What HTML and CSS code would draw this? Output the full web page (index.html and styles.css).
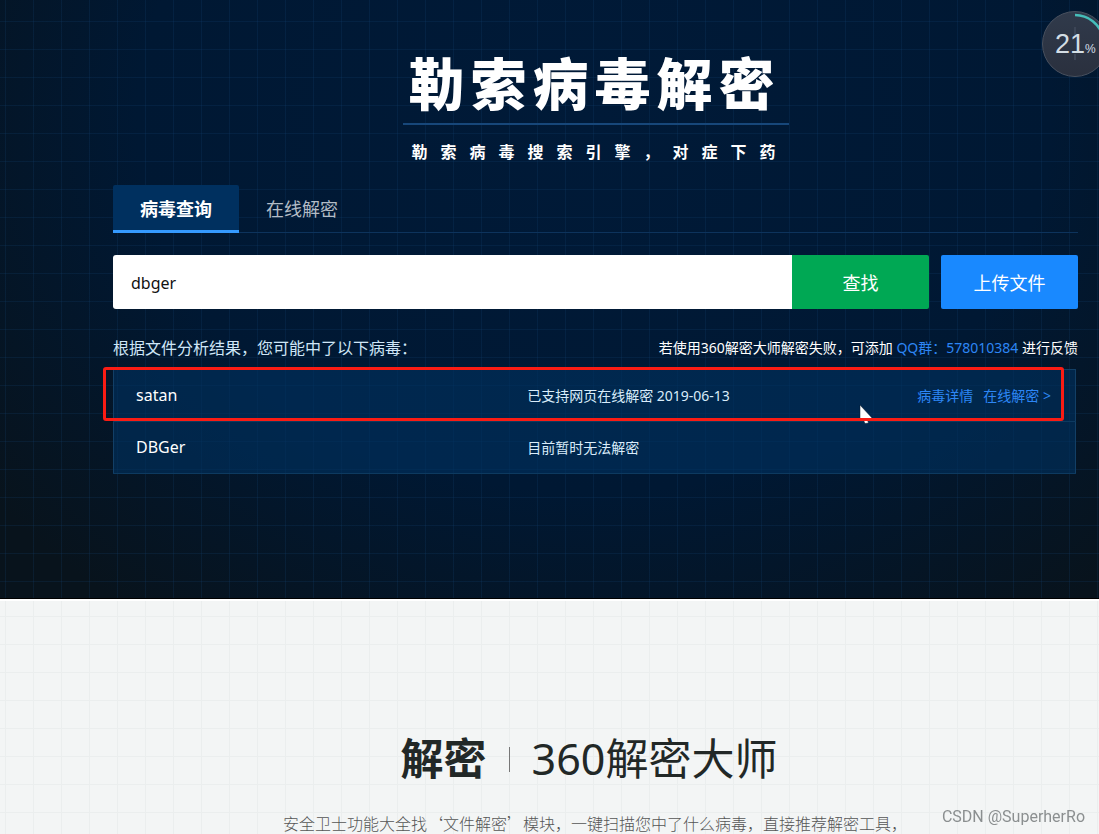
FILE: index.html
```html
<!DOCTYPE html>
<html lang="zh-CN">
<head>
<meta charset="utf-8">
<title>勒索病毒解密</title>
<link rel="stylesheet" href="styles.css">
</head>
<body>
<header class="hero">
  <div class="brand">
    <h1 class="brand-title">勒索病毒解密</h1>
    <p class="brand-sub">勒索病毒搜索引擎，对症下药</p>
  </div>
  <nav class="tabs">
    <button class="tab tab-active" type="button">病毒查询</button>
    <button class="tab" type="button">在线解密</button>
  </nav>
  <form class="search">
    <input class="search-input" type="text" value="dbger" aria-label="病毒名称">
    <button class="btn btn-find" type="button">查找</button>
    <button class="btn btn-upload" type="button">上传文件</button>
  </form>
  <div class="notes">
    <p class="notes-result">根据文件分析结果，您可能中了以下病毒：</p>
    <p class="notes-help">若使用360解密大师解密失败，可添加 <a href="#">QQ群：578010384</a> 进行反馈</p>
  </div>
  <div class="results-wrap">
    <table class="results">
      <tr>
        <td class="col-name">satan</td>
        <td class="col-state">已支持网页在线解密 2019-06-13</td>
        <td class="col-links"><a href="#">病毒详情</a><a href="#">在线解密 &gt;</a></td>
      </tr>
      <tr>
        <td class="col-name">DBGer</td>
        <td class="col-state">目前暂时无法解密</td>
        <td class="col-links"></td>
      </tr>
    </table>
    <svg class="cursor" viewBox="0 0 14 20" aria-hidden="true"><path d="M1 0V16L4 14L6 18.500L9.500 18L8 13.500H13.500Z" fill="#fff" stroke="#0a1a2c" stroke-width="0.500"/></svg>
    <div class="marker"></div>
  </div>
  <div class="meter">
    <svg class="meter-ring" viewBox="0 0 66 66" aria-hidden="true">
      <defs><linearGradient id="disc" x1="0" y1="0" x2="0" y2="1"><stop offset="0" stop-color="#303a4b"/><stop offset="1" stop-color="#2a303e"/></linearGradient></defs>
      <circle cx="33" cy="33" r="32.500" fill="url(#disc)" stroke="#48505e"/>
      <path d="M33 26V16M33 43V49" stroke="#3c4556" stroke-width="2"/>
      <path d="M33 4A29 29 0 0 1 61 26" fill="none" stroke="#45bdb9" stroke-width="2.500"/>
    </svg>
    <span class="meter-value">21<small>%</small></span>
  </div>
</header>
<main class="tool">
  <h2 class="tool-title"><b>解密</b><span class="tool-bar"></span><span>360解密大师</span></h2>
  <p class="tool-text">安全卫士功能大全找‘文件解密’模块，一键扫描您中了什么病毒，直接推荐解密工具，</p>
</main>
<div class="watermark">CSDN @SuperherRo</div>
</body>
</html>
```

FILE: styles.css
```css
* {
  box-sizing: border-box;
}

body {
  margin: 0;
  overflow-x: hidden;
  background: #f3f5f5;
  font-family: "Noto Sans", "Noto Sans CJK SC", sans-serif;
  font-size: 16px;
}

h1, h2, p {
  margin: 0;
}

a {
  color: #2d86f5;
  text-decoration: none;
}

button, input {
  border: 0;
  font-family: inherit;
}

.hero {
  position: relative;
  min-height: 599px;
  padding: 43px 21px 124px 113px;
  overflow: hidden;
  border-bottom: 1px solid #000;
  color: #fff;
  background:
    repeating-linear-gradient(90deg, transparent 0 5px, rgba(20, 70, 120, 0.2) 5px 6px, transparent 6px 28px),
    repeating-linear-gradient(180deg, transparent 0 21px, rgba(20, 70, 120, 0.2) 21px 22px, transparent 22px 28px),
    radial-gradient(ellipse 760px 620px at 54% 20%, #001a38 0%, #001833 60%, #08131c 100%);
}

.brand {
  display: flex;
  flex-direction: column;
  align-items: center;
}

.brand-title {
  width: 386px;
  padding-left: 6px;
  border-bottom: 2px solid #17477a;
  font-size: 56px;
  font-weight: 900;
  line-height: 80px;
  letter-spacing: 6px;
  white-space: nowrap;
}

.brand-sub {
  width: 386px;
  padding: 14px 0 0 9px;
  font-size: 16px;
  font-weight: 700;
  line-height: 26px;
  letter-spacing: 13px;
  white-space: nowrap;
}

.tabs {
  display: flex;
  margin-top: 20px;
  border-bottom: 1px solid #0d335c;
}

.tab {
  width: 126px;
  height: 48px;
  margin-bottom: -1px;
  padding: 0;
  border-bottom: 3px solid transparent;
  background: none;
  color: #b3bcc6;
  font-size: 18px;
}

.tab-active {
  border-bottom-color: #359aff;
  border-radius: 2px 2px 0 0;
  background: #00305f;
  color: #fff;
  font-weight: 700;
}

.search {
  display: flex;
  margin-top: 22px;
}

.search-input {
  flex: 1;
  min-width: 0;
  height: 54px;
  padding: 2px 18px 0;
  border-radius: 3px 0 0 3px;
  background: #fff;
  color: #111;
  font-size: 16px;
}

.btn {
  width: 137px;
  height: 54px;
  border-radius: 2px;
  color: #fff;
  font-size: 18px;
}

.btn-find {
  border-radius: 0 2px 2px 0;
  background: #00a854;
}

.btn-upload {
  margin-left: 12px;
  background: #1989ff;
}

.notes {
  display: flex;
  justify-content: space-between;
  align-items: center;
  margin-top: 26px;
  line-height: 26px;
  white-space: nowrap;
}

.notes-result {
  color: #cfe6f7;
  font-size: 16px;
}

.notes-help {
  font-size: 14px;
}

.results-wrap {
  position: relative;
  margin: 8px 2px 0 0;
}

.results {
  width: 100%;
  border: 1px solid #123f66;
  border-collapse: collapse;
  background: rgba(0, 50, 96, 0.6);
}

.results td {
  height: 52px;
  padding: 0 0 2px;
  border-bottom: 1px solid #0d3a60;
}

.results .col-name {
  width: 43%;
  padding-left: 22px;
  font-size: 16px;
}

.col-state {
  color: #d9ecfa;
  font-size: 14px;
}

.results .col-links {
  padding-right: 24px;
  font-size: 14px;
  text-align: right;
}

.col-links a + a {
  margin-left: 10px;
}

.marker {
  position: absolute;
  top: -2px;
  right: 12px;
  left: -10px;
  height: 54px;
  border: 3px solid #fa1c14;
  border-radius: 3px;
}

.cursor {
  position: absolute;
  top: 36px;
  right: 203px;
  width: 14px;
  height: 20px;
}

.meter {
  position: absolute;
  top: 11px;
  right: -9px;
  width: 66px;
  height: 66px;
}

.meter-ring {
  width: 66px;
  height: 66px;
}

.meter-value {
  position: absolute;
  top: 18px;
  left: 13px;
  color: #d3dde4;
  font-family: "Liberation Sans", Arial, sans-serif;
  font-size: 27px;
  line-height: 30px;
  white-space: nowrap;
}

.meter-value small {
  font-size: 12px;
}

.tool {
  display: flex;
  flex-direction: column;
  align-items: center;
  min-height: 234px;
  padding: 128px 34px 8px 113px;
  border-top: 2px solid #fff;
  color: #222827;
  background:
    repeating-linear-gradient(90deg, transparent 0 5px, #ebeeee 5px 6px, transparent 6px 28px),
    repeating-linear-gradient(180deg, transparent 0 15px, #ebeeee 15px 16px, transparent 16px 28px),
    #f3f5f5;
}

.tool-title {
  display: flex;
  align-items: center;
  font-size: 43px;
  font-weight: 400;
  line-height: 60px;
  white-space: nowrap;
}

.tool-title b {
  font-weight: 700;
}

.tool-bar {
  width: 1px;
  height: 25px;
  margin: 0 22px;
  background: #777;
}

.tool-text {
  margin-top: 22px;
  padding-left: 12px;
  color: #555;
  font-family: "Noto Sans CJK SC", sans-serif;
  font-size: 16px;
  font-weight: 300;
  line-height: 24px;
  white-space: nowrap;
}

.watermark {
  position: fixed;
  right: 14px;
  bottom: 7px;
  color: #8b8f90;
  font-family: Roboto, sans-serif;
  font-size: 16px;
  line-height: 20px;
}
```
